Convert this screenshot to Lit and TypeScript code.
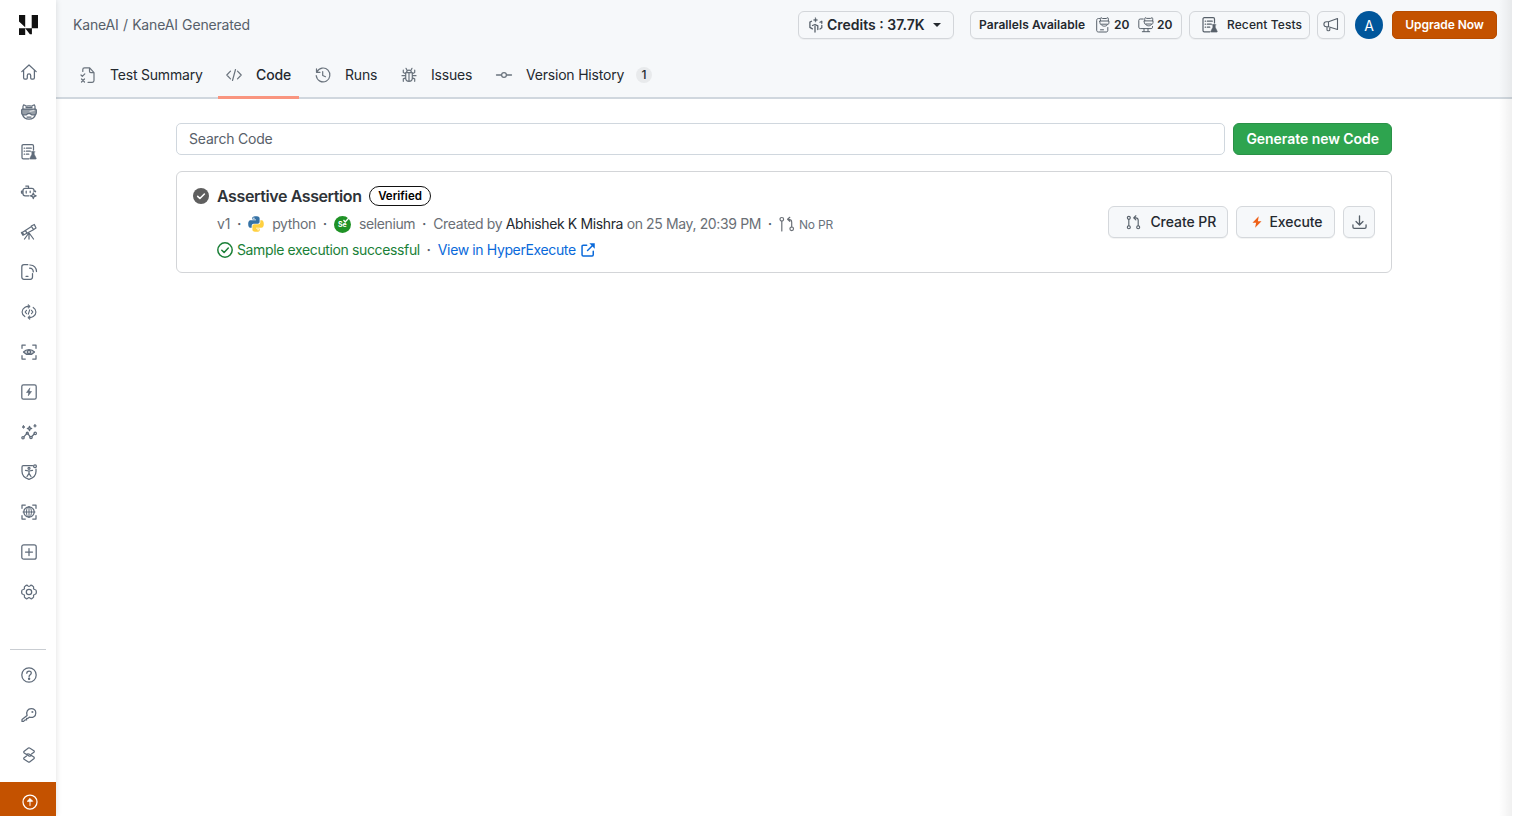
import { LitElement, html, svg, css, nothing } from "lit";
import { customElement, property } from "lit/decorators.js";

// Line icons on a 16 x 16 grid, drawn with the element's weight unless a shape overrides it.
const ICONS: Record<string, unknown> = {
  home: svg`<path d="M.8 7.6 8 1l7.2 6.6M2.6 6.3v7.4c0 .8.5 1.3 1.3 1.3h1.4c.6 0 1-.4 1-1v-2.4c0-1 .7-1.7 1.7-1.7s1.7.7 1.7 1.7V14c0 .6.4 1 1 1h1.4c.8 0 1.3-.5 1.3-1.3V6.3"/>`,
  kane: svg`<path d="M2 5C1.8 3 2 1.5 2.600.9c1 .1 1.800.6 2.600 1.300 1.800-.4 3.800-.4 5.600 0C11.600 1.500 12.400 1 13.400.9c.6.6.8 2.100.6 4.100M1.500 10.500c.8 2.800 3.300 4.700 6.500 4.700s5.700-1.900 6.500-4.700M6 13h4"/><path d="M1.600 5h12.800c.5 0 .9.4.9.9v3.200c0 1-.7 1.700-1.700 1.700h-3L9 9.500H7l-1.600 1.300h-3C1.400 10.800.7 10.100.7 9.100V5.900c0-.5.4-.9.900-.9z" fill="currentColor" fill-opacity=".65"/><path d="M5 3.600h6"/><path d="M9 7.300 13 6.300" stroke="#fff" stroke-opacity=".6"/>`,
  tests: svg`<path d="M12.500 6V2c0-.8-.5-1.300-1.300-1.300H2.300C1.500.7 1 1.200 1 2v11.500c0 .8.500 1.300 1.300 1.300H8M3.200 4.200h.3M5.300 4.200h5M3.200 7.200h.3M5.300 7.200h4M3.200 10.200h.3M5.300 10.200h2.500"/><path d="M10 7.800h4M10.900 7.800v2.500L8.900 14.300c-.2.500.1.800.6.800h5.200c.5 0 .7-.4.500-.8l-2-4V7.800z" fill="currentColor" stroke-width=".6"/>`,
  bot: svg`<path d="M8 11.800H4.200C2.800 11.800 2 11 2 9.700V6.500c0-1.300.8-2.100 2.200-2.100h6.600c1.400 0 2.200.8 2.200 2.100V7.500M7.500 4.400V2.100H4.800M2 7H.5v2H2M13 7h1.500v.8M5.200 7v2M9.200 7v1.600M12.300 9l.8 2 2 .8-2 .8-.8 2-.8-2-2-.8 2-.8z"/>`,
  telescope: svg`<path d="m1.200 8.500 9.300-6 2 3.200L3 10.800zM10.300 2l3-1.500 1.700 3.500-2.700 1.700M1 8.300l-.6.500 1.500 2.500 1-.6M4.500 6.500l1.400 2.600M7.500 9.500 3.500 15M8.500 9.500l4 5.500M8 9.500V15"/>`,
  device: svg`<path d="M6.800.7H3C1.600.7.800 1.500.800 2.900v10.200c0 1.400.8 2.200 2.200 2.200h6.300c1.400 0 2.200-.8 2.200-2.200V9.500M5 12.300h2M9 1c3.800.2 6.300 2.700 6.500 6.500M8.600 4.200c2.300.1 3.600 1.400 3.700 3.700"/>`,
  cycle: svg`<path d="M3.800 12.600C.2 10.400.2 5.600 3.700 3.400c1.100-.7 2.300-1 3.600-1M12.200 3.400C15.800 5.600 15.800 10.400 12.300 12.600c-1.100.7-2.300 1-3.600 1M5.500 6.300 4.100 8l1.400 1.700M10.500 6.300 11.900 8l-1.400 1.700M8.700 5.800l-1.400 4.400" stroke-width="1.150"/><path d="M7.500.8 9.200 2.400 7.500 4zM8.500 15.200 6.800 13.600 8.500 12z" fill="currentColor" stroke-width=".8"/>`,
  eye: svg`<path d="M1 4.300V1h3.300M11.700 1H15v3.300M15 11.700V15h-3.300M4.300 15H1v-3.300" /><path d="M2.500 8C5.300 4.700 10.700 4.700 13.500 8 10.700 11.300 5.300 11.300 2.500 8z" fill="currentColor" fill-opacity=".25"/><circle cx="8" cy="8" r="1.600"/>`,
  boltbox: svg`<rect x=".8" y=".8" width="14.400" height="14.400" rx="1.600"/><path d="M8.700 4.200 5.500 8.500h2.200l-.4 3.300 3.200-4.300H8.300z" fill="currentColor" stroke-width=".6"/>`,
  insight: svg`<path d="M3 12.700 5.500 9.800M7 9.800l2.200 3M10.800 12.500l2.500-2.500"/><circle cx="2" cy="13.700" r="1.200"/><circle cx="6.300" cy="9.200" r="1"/><circle cx="10" cy="13.500" r="1.200"/><circle cx="14.200" cy="9.400" r="1.200"/><path d="M8.500 2.300 9.100 3.900 10.700 4.500l-1.600.6-.6 1.600-.6-1.600-1.600-.6 1.600-.6z" /><path d="M2.500 1.600l.4 1 1 .4-1 .4-.4 1-.4-1-1-.4 1-.4zM14 .5l.4 1 1 .4-1 .4-.4 1-.4-1-1-.4 1-.4z" fill="currentColor" stroke-width=".8"/>`,
  shield: svg`<path d="M11.500 1.700H2.300c-.8 0-1.300.5-1.300 1.300v4.500c0 3.900 2.700 6.500 7 7.800 4.300-1.300 7-3.900 7-7.800V5M4.500 6.300 8 7l3.500-.7M8 7v2.300M6 12.500l2-3.200 2 3.200"/><circle cx="8" cy="4.300" r="1"/><circle cx="14" cy="2.300" r="1.400"/>`,
  globe: svg`<path d="M1 4.300V1h3.300M11.700 1H15v3.300M15 11.700V15h-3.300M4.300 15H1v-3.300"/><path d="M2 8h12M8 3v10" stroke-width="1"/><circle cx="8" cy="8" r="5.200"/><ellipse cx="8" cy="8" rx="2.500" ry="5.200" stroke-width="1"/>`,
  plus: svg`<rect x=".8" y=".8" width="14.400" height="14.400" rx="2"/><path d="M8 4.500v7M4.500 8h7"/>`,
  gear: svg`<path d="M5.300 1.400c.7-.4 1.200-.1 1.600.4.600.7 1.600.7 2.200 0 .4-.5.900-.8 1.600-.4l1.300.8c.7.400.8.900.6 1.500-.3 1 .1 1.600 1.100 1.800.7.200 1.600.5 1.600 1.400v2.200c0 .9-.9 1.200-1.600 1.400-1 .2-1.400.800-1.100 1.800.2.600.1 1.100-.6 1.500l-1.300.8c-.7.400-1.200.1-1.600-.4-.6-.7-1.600-.7-2.200 0-.4.5-.9.800-1.600.4L4 13.800c-.7-.4-.8-.9-.6-1.500.3-1-.1-1.600-1.100-1.800-.7-.2-1.600-.5-1.600-1.400V6.900c0-.9.900-1.200 1.600-1.400 1-.2 1.400-.8 1.100-1.800-.2-.6-.1-1.100.6-1.500z"/><circle cx="8" cy="8" r="2.700"/>`,
  help: svg`<circle cx="8" cy="8" r="7.200"/><path d="M5.800 6.300C5.800 3.300 10.300 3.500 10.300 6.100 10.300 7.800 8.100 7.800 8.100 9.500"/><circle cx="8.100" cy="11.800" r=".6" fill="currentColor"/>`,
  key: svg`<path d="M6.100 8.500C4.800 4.800 6.800 1.500 10.300 1.500c2.600 0 4.500 1.900 4.500 4.400 0 3.400-3 5.300-6.500 4.200L7 11.400H5.600v1.500H4.100l-1.500 1.500H1v-1.900z"/><circle cx="11.400" cy="4.900" r=".4"/>`,
  stack: svg`<path d="M10.500 6.900 12.900 5.200c.5-.4.5-1 0-1.400L8.600 1c-.4-.3-.8-.3-1.200 0L3.200 4.200c-.6.500-.6 1.200 0 1.700L7.500 8.700M5.500 9.100 3.100 10.800c-.5.4-.5 1 0 1.400L7.400 15c.4.300.8.300 1.200 0l4.200-3.200c.6-.5.6-1.200 0-1.700L8.500 7.300c-1-.6-2-.6-3 .1M10.500 8.600c-1 .7-2 .7-3 .1"/>`,
  up: svg`<circle cx="8" cy="8" r="7"/><path d="M8 11.500V5M5.600 7 8 4.600l2.400 2.400z" fill="currentColor" stroke-width="1"/>`,
  summary: svg`<path d="M2.800 4.500V2.500C2.800 1.300 3.500.800 4.500.8h5.200L14 5.600v8c0 1-.6 1.700-1.700 1.700H8M9.500 .8v3.500c0 .9.5 1.300 1.300 1.300H14M1 8l1.300 1.300L4.800 6.800M1.500 12l3 3M4.500 12l-3 3"/>`,
  code: svg`<path d="M4.500 4.200.8 8l3.700 3.800M11.500 4.200 15.200 8l-3.700 3.800M9.500 2.500l-3 11"/>`,
  history: svg`<path d="M1.500 1.800v3.500H5M1.700 5.200C4 .5 9.800-.3 13 3.200c3 3.300 2.300 8.600-1.500 10.800C7 16.500 1.800 13.600 1.200 8.500M7.700 4.500v4l2.800 1.200"/>`,
  bug: svg`<path d="M4.700 5.700h6.600v5.300c0 2-1.300 3.300-3.300 3.300s-3.300-1.300-3.300-3.300zM5.600 5.300C5.600 2.500 10.400 2.500 10.400 5.300M8 5.700v8.500M1 8.700h3.700M11.300 8.700H15M4.700 6.700 2.300 5.500V3M11.300 6.700l2.400-1.200V3M4.700 10.900l-2.400 1V14.300M11.300 10.900l2.400 1V14.300M6 3.300 5 1.300M10 3.300l1-2"/>`,
  commit: svg`<path d="M.5 8h5M10.500 8h5" stroke-width="1.300"/><circle cx="8" cy="8" r="2.400" stroke-width="1.200"/>`,
  credits: svg`<path d="M3.500 4.200 1.900 5.100v5.300l2.500 1.500M7 15V9.200M4.500 8.500 7 7.500l2.800 1.300M9.800 12.500V8.800M12 5.300l1.800-1v2M13.800 8.500v2.300L12 12" stroke-width="1.300"/><path d="m7.500.8.6 1.600 1.600.6-1.600.6-.6 1.600-.6-1.600-1.600-.6 1.600-.6z" fill="currentColor" stroke-width=".5"/>`,
  mobile: svg`<path d="M4.500 1.500H3.500C2.300 1.500 1.700 2.200 1.700 3.300v10c0 1.100.6 1.700 1.800 1.700h7.500c1.200 0 1.800-.6 1.800-1.700V10.500M5.500 12.800h3"/><path d="M5.500 3.800C5.200 2 5.500 1 5.900.7l1.700.8h3.600l1.700-.8c.5.4.7 1.400.4 3.100M4.900 4h9v1.800c0 1-.4 1.400-1.400 1.400H6.300c-1 0-1.400-.4-1.400-1.400zM6 7.600c1.500 2.200 5.200 2.200 6.700 0"/>`,
  desktop: svg`<path d="M5.300 2H2.200C1.300 2 .8 2.500.800 3.400v6.800c0 .9.500 1.400 1.400 1.400h11c.8 0 1.300-.5 1.300-1.300V9.500M6 11.600v2.900M10 11.600v2.900M4.300 14.700h7.400"/><path d="M6.800 3.700C6.500 2 6.800 1 7.200.7l1.500.7h4l1.500-.7c.5.4.7 1.400.5 3M6.300 3.900H15v1.700c0 1-.4 1.400-1.400 1.400h-6c-1 0-1.300-.4-1.300-1.400zM7.600 7.400c1.400 2 4.700 2 6.100 0"/>`,
  horn: svg`<path d="M5.500 4.700 14.500 1.500v11L5.500 9.700H3.400C1.900 9.700.9 8.600.9 7.200s1-2.500 2.500-2.500zM5.500 4.700v5M4 9.700v3.200c0 1.200 2.800 1.200 2.800 0v-2.700" stroke-width="1.100"/>`,
  pr: svg`<circle cx="3" cy="3" r="1.600"/><circle cx="3" cy="13" r="1.600"/><circle cx="13" cy="13" r="1.600"/><path d="M3 4.600v6.800M13 11.400V5.500C13 4 12 3 10.500 3H8.300M10.500.8 8.200 3l2.300 2.200"/>`,
  nopr: svg`<circle cx="2.800" cy="3.300" r="1.800"/><circle cx="12.700" cy="12.800" r="1.800"/><path d="M2.800 5.200V15M12.700 11V6.300C12.700 4.300 11.700 3.300 8.800 3.300M10.800 1.300 8.600 3.300l2.200 2"/>`,
  flash: svg`<path d="M10.300.2 2 9h4.800L5.500 15.800 14 7H9.200z" fill="currentColor" stroke="none"/>`,
  download: svg`<path d="M8 1v9.500M4.300 7 8 10.700 11.700 7M1 10.500v2.300c0 .9.500 1.400 1.400 1.400h11.200c.9 0 1.400-.5 1.400-1.400v-2.300" stroke-width="1.400"/>`,
  okfill: svg`<circle cx="8" cy="8" r="8" fill="currentColor" stroke="none"/><path d="m4.700 8.400 2.200 2.100 4.500-4.500" stroke="#fff" stroke-width="1.600"/>`,
  ok: svg`<circle cx="8" cy="8" r="7.200" stroke-width="1.500"/><path d="m4.800 8.200 2.300 2.200 4.200-4.300" stroke-width="1.500"/>`,
  external: svg`<path d="M6.500 2.500H2.500c-.8 0-1.300.5-1.300 1.300V13.500c0 .8.5 1.300 1.300 1.300h10.200c.8 0 1.300-.5 1.300-1.300V9.500M7.500 8.500l6-6" stroke-width="1.700"/><path d="M9.500.3h6.200v6.200z" fill="currentColor" stroke="none"/>`,
  python: svg`<path d="M7.900.2C4 .2 4.300 1.900 4.300 1.900v1.700H8v.6H2.700S.2 3.900.2 7.900s2.200 3.800 2.200 3.800h1.300V9.900s-.1-2.200 2.100-2.200h3.700s2.100 0 2.100-2V2.300S11.900.2 7.900.2z" fill="#3672a5" stroke="none"/><path d="M8.100 15.800c3.900 0 3.600-1.700 3.600-1.700v-1.700H8v-.6h5.300s2.500.3 2.500-3.700-2.200-3.800-2.200-3.800h-1.300v1.800s.1 2.200-2.100 2.200H6.500s-2.100 0-2.100 2v3.400s-.3 2.100 3.700 2.100z" fill="#ffd040" stroke="none"/><circle cx="5.900" cy="2.200" r=".7" fill="#fff" stroke="none"/><circle cx="10.100" cy="13.800" r=".7" fill="#fff" stroke="none"/>`,
};

@customElement("ui-icon")
class UiIcon extends LitElement {
  @property() name = "";
  @property({ type: Number }) size = 16;
  @property({ type: Number }) weight = 1.2;
  static styles = css`
    :host { display: inline-flex; flex: none; }
    svg { display: block; overflow: visible; }
  `;
  render() {
    return html`<svg width=${this.size} height=${this.size} viewBox="0 0 16 16" fill="none"
      stroke="currentColor" stroke-width=${this.weight} stroke-linecap="round" stroke-linejoin="round">${ICONS[this.name]}</svg>`;
  }
}

@customElement("app-sidebar")
class AppSidebar extends LitElement {
  static styles = css`
    :host {
      display: flex; flex-direction: column; flex: none; box-sizing: border-box;
      width: 56px; height: 816px; background: #fff; color: #5f6b7a;
      box-shadow: 0 0 6px rgba(0, 0, 0, 0.13); z-index: 2;
    }
    .logo { height: 52px; padding: 14px 0 0 19px; box-sizing: border-box; }
    .logo svg { display: block; }
    .item { height: 40px; display: flex; align-items: center; justify-content: center; padding-left: 2px; }
    .rule { height: 1px; background: #c9cdd2; margin: 37px 10px 5px; }
    .bottom { margin-top: 7px; height: 34px; background: #c45200; color: #fff; display: flex; justify-content: center; padding: 12px 0 0 4px; box-sizing: border-box; }
  `;
  render() {
    const main = ["home", "kane", "tests", "bot", "telescope", "device", "cycle", "eye", "boltbox", "insight", "shield", "globe", "plus", "gear"];
    return html`
      <div class="logo">
        <svg width="20" height="21" viewBox="0 0 20 21" fill="#111">
          <path d="M0 1h6.200v12.300L0 7.500zM0 14.200h6.200V21H0zM12.700 1H19v13.200h-6.300zM6.200 14.200h6.700v6.100h-2z"/>
        </svg>
      </div>
      ${main.map((n) => html`<div class="item"><ui-icon name=${n} weight="1.25"></ui-icon></div>`)}
      <div class="rule"></div>
      ${["help", "key", "stack"].map((n) => html`<div class="item"><ui-icon name=${n} weight="1.25"></ui-icon></div>`)}
      <div class="bottom"><ui-icon name="up" weight="1.25"></ui-icon></div>
    `;
  }
}

@customElement("app-topbar")
class AppTopbar extends LitElement {
  static styles = css`
    :host { display: flex; flex-direction: column; box-sizing: border-box; height: 99px; background: #f6f8fa; border-bottom: 2px solid #d0d7de; }
    .top { display: flex; flex: none; align-items: center; height: 50px; box-sizing: border-box; padding: 0 16px 0 17px; }
    .crumb { flex: 1; font-size: 14px; color: #57606a; letter-spacing: -0.16px; word-spacing: 0.5px; padding-bottom: 1px; }
    .box { display: flex; align-items: center; box-sizing: border-box; height: 28px; border: 1px solid #d3d6da; border-radius: 6px; box-shadow: 0 1px 0 rgba(27, 31, 36, 0.04); color: #24292f; font-size: 12px; font-weight: 600; white-space: nowrap; }
    .box span { padding-bottom: 1px; }
    .box ui-icon { color: #57606a; }
    .credits { width: 156px; padding-left: 9px; font-size: 14px; margin-right: 16px; }
    .credits span { margin-left: 3px; }
    .caret { width: 0; border: 4px solid transparent; border-top-color: #24292f; border-bottom: 0; margin-left: 8px; }
    .par { width: 212px; padding-left: 8px; margin-right: 7px; letter-spacing: 0.07px; }
    .par .l { width: 116px; }
    .par .n { width: 24px; margin-left: 3px; letter-spacing: 0; font-size: 12px; }
    .recent { width: 121px; padding-left: 12px; margin-right: 7px; font-weight: 500; letter-spacing: 0.1px; }
    .recent span { margin-left: 9px; }
    .horn { width: 28px; justify-content: center; margin-right: 10px; }
    .avatar { width: 28px; height: 28px; border-radius: 50%; background: #00569b; color: #fff; display: flex; align-items: center; justify-content: center; font-size: 14px; margin-right: 9px; }
    .upgrade { width: 105px; height: 28px; border-radius: 5px; background: #c45200; color: #fff; display: flex; align-items: center; justify-content: center; font-size: 12px; font-weight: 600; border: 1px solid #b74c00; box-sizing: border-box; letter-spacing: -0.08px; padding-bottom: 1px; }
    .tabs { display: flex; flex: none; gap: 8px; height: 49px; padding-left: 16px; margin-bottom: -2px; }
    .tab { display: flex; align-items: center; height: 49px; padding: 3px 8px 0; box-sizing: border-box; font-size: 14px; letter-spacing: -0.2px; color: #24292f; border-bottom: 3px solid transparent; white-space: nowrap; }
    .tab ui-icon { color: #6a737d; margin-right: 14px; }
    .active { border-bottom-color: #f9957f; font-weight: 500; letter-spacing: -0.1px; }
    .count { width: 16px; height: 16px; border-radius: 8px; background: #e8eaec; font-size: 12px; font-weight: 500; line-height: 16px; text-align: center; margin-left: 12px; }
  `;
  render() {
    const tabs: [string, string, number, string?][] = [
      ["summary", "Test Summary", 92], ["code", "Code", 35], ["history", "Runs", 32], ["bug", "Issues", 41], ["commit", "Version History", 98, "1"],
    ];
    return html`
      <div class="top">
        <div class="crumb">KaneAI / KaneAI Generated</div>
        <div class="box credits"><ui-icon name="credits"></ui-icon><span>Credits : 37.7K</span><i class="caret"></i></div>
        <div class="box par"><span class="l">Parallels Available</span><ui-icon name="mobile" weight="1"></ui-icon><span class="n">20</span><ui-icon name="desktop" weight="1"></ui-icon><span class="n">20</span></div>
        <div class="box recent"><ui-icon name="tests"></ui-icon><span>Recent Tests</span></div>
        <div class="box horn"><ui-icon name="horn"></ui-icon></div>
        <div class="avatar">A</div>
        <div class="upgrade">Upgrade Now</div>
      </div>
      <div class="tabs">
        ${tabs.map(([icon, label, w, count]) => html`
          <div class="tab ${label === "Code" ? "active" : ""}"><ui-icon name=${icon}></ui-icon><span style="width:${w}px">${label}</span>${count ? html`<span class="count">${count}</span>` : nothing}</div>`)}
      </div>
    `;
  }
}

@customElement("code-list")
class CodeList extends LitElement {
  static styles = css`
    :host { display: flex; flex-direction: column; gap: 16px; padding: 24px 121px 0 120px; }
    .search { display: flex; gap: 8px; }
    .field { flex: 1; height: 32px; box-sizing: border-box; border: 1px solid #d0d7de; border-radius: 5px; padding: 0 12px; line-height: 30px; font-size: 14px; letter-spacing: -0.2px; color: #586069; }
    .gen { width: 158.600px; height: 32px; box-sizing: border-box; border: 1px solid #2a9147; border-radius: 6px; background: #2ea44f; color: #fff; font-size: 14px; font-weight: 600; letter-spacing: -0.05px; display: flex; align-items: center; justify-content: center; white-space: nowrap; padding-bottom: 1px; }
    .card { display: flex; align-items: center; height: 102px; box-sizing: border-box; border: 1px solid #d3d5d8; border-radius: 6px; padding: 0 16px; }
    .info { flex: 1; display: flex; flex-direction: column; }
    .row { display: flex; align-items: center; white-space: nowrap; font-size: 14px; color: #6a6f76; }
    .r1 { height: 28px; }
    .r1 ui-icon { color: #5f5f5f; }
    .title { width: 144px; margin-left: 8px; font-size: 16px; font-weight: 600; letter-spacing: -0.4px; color: #2f3338; }
    .pill { margin-left: 8px; width: 62px; height: 20px; box-sizing: border-box; border: 1px solid #111; border-radius: 10px; font-size: 11.500px; font-weight: 600; color: #000; line-height: 18px; text-align: center; }
    .r2 { height: 28px; padding-left: 24px; }
    .r3 { height: 24px; padding-left: 24px; color: #1a7f37; }
    .t { letter-spacing: -0.37px; padding-bottom: 1px; }
    .dot { width: 18px; text-align: center; font-weight: 600; color: #57606a; padding-bottom: 1px; }
    .v { width: 13.200px; letter-spacing: 0; }
    .lang { margin-left: 8px; }
    .who { color: #24292f; }
    .small { font-size: 12px; margin-left: 4px; color: #6a737d; letter-spacing: -0.2px; }
    .badge { width: 17px; height: 17px; border-radius: 50%; background: #1f9226; color: #fff; flex: none; display: flex; align-items: center; justify-content: center; font-size: 7px; font-weight: 700; padding-top: 1px; box-sizing: border-box; }
    .badge svg { display: block; overflow: visible; }
    .badge .tick { position: absolute; margin: -10px 0 0 9px; }
    .done { margin-left: 4px; }
    .link { color: #0969da; margin-right: 5.500px; }
    .blue { color: #0969da; }
    .actions { display: flex; gap: 8px; }
    .btn { display: flex; align-items: center; box-sizing: border-box; height: 32px; border: 1px solid #d5d8dc; border-radius: 6px; background: #f6f8fa; box-shadow: 0 1px 0 rgba(27, 31, 36, 0.05); font-size: 14px; font-weight: 500; color: #24292f; white-space: nowrap; letter-spacing: -0.06px; }
    .btn span { padding-bottom: 1px; }
    .btn ui-icon { color: #57606a; }
    .create { width: 120px; padding-left: 17px; gap: 9px; }
    .exec { width: 98.600px; padding-left: 14px; gap: 6px; }
    .btn .hot { color: #ee6017; }
    .dl { width: 32px; justify-content: center; }
  `;
  render() {
    return html`
      <div class="search"><div class="field">Search Code</div><div class="gen">Generate new Code</div></div>
      <div class="card">
        <div class="info">
          <div class="row r1"><ui-icon name="okfill"></ui-icon><span class="title">Assertive Assertion</span><span class="pill">Verified</span></div>
          <div class="row r2">
            <span class="t v">v1</span><span class="dot">·</span><ui-icon name="python"></ui-icon><span class="t lang">python</span><span class="dot">·</span>
            <span class="badge">Se<svg class="tick" width="7" height="6" viewBox="0 0 7 6" fill="none" stroke="#fff" stroke-width="1.300"><path d="M.5 3 2.200 5 6.500.300"/></svg></span><span class="t lang">selenium</span><span class="dot">·</span>
            <span class="t">Created by <span class="who">Abhishek K Mishra</span> on 25 May, 20:39 PM</span><span class="dot">·</span>
            <ui-icon name="nopr"></ui-icon><span class="small">No PR</span>
          </div>
          <div class="row r3"><ui-icon name="ok"></ui-icon><span class="t done">Sample execution successful</span><span class="dot">·</span><span class="t link">View in HyperExecute</span><ui-icon class="blue" name="external" size="14"></ui-icon></div>
        </div>
        <div class="actions">
          <div class="btn create"><ui-icon name="pr" size="15"></ui-icon><span>Create PR</span></div>
          <div class="btn exec"><ui-icon class="hot" name="flash" size="12"></ui-icon><span>Execute</span></div>
          <div class="btn dl"><ui-icon name="download" size="15"></ui-icon></div>
        </div>
      </div>
    `;
  }
}

@customElement("app-root")
class AppRoot extends LitElement {
  static styles = css`
    :host { display: block; font-family: Inter, "Liberation Sans", sans-serif; }
    .shell { position: relative; display: flex; width: 100%; height: 816px; overflow: hidden; background: #fff; }
    .main { flex: 1; min-width: 0; }
    .edge { position: absolute; right: 0; top: 0; width: 14px; height: 816px; box-sizing: border-box; border-right: 1px solid #fff; background: linear-gradient(90deg, rgba(0, 0, 0, 0), rgba(0, 0, 0, 0.06)); z-index: 3; }
  `;
  render() {
    return html`<div class="shell"><app-sidebar></app-sidebar><div class="main"><app-topbar></app-topbar><code-list></code-list></div><div class="edge"></div></div>`;
  }
}
